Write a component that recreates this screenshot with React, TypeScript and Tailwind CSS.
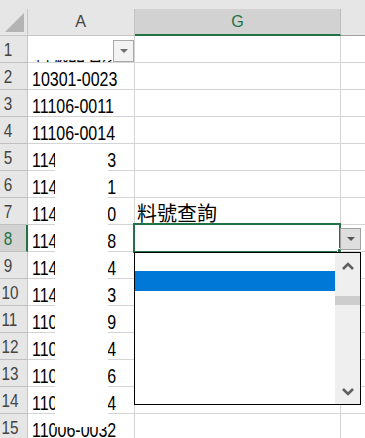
import React from 'react';

const GREEN = '#217346';

type RowDef = { n: number; a: string };

const rows: RowDef[] = [
  { n: 1, a: '' },
  { n: 2, a: '10301-0023' },
  { n: 3, a: '11106-0011' },
  { n: 4, a: '11106-0014' },
  { n: 5, a: '11405-0013' },
  { n: 6, a: '11405-0021' },
  { n: 7, a: '11406-0010' },
  { n: 8, a: '11406-0018' },
  { n: 9, a: '11407-0004' },
  { n: 10, a: '11407-0013' },
  { n: 11, a: '11006-0019' },
  { n: 12, a: '11006-0024' },
  { n: 13, a: '11006-0026' },
  { n: 14, a: '11006-0034' },
  { n: 15, a: '11006-0032' },
];

function Chevron({ up }: { up: boolean }) {
  return (
    <svg width="12" height="8" viewBox="0 0 12 8">
      <polyline
        points={up ? '1,7 6,2 11,7' : '1,1 6,6 11,1'}
        fill="none"
        stroke="#606060"
        strokeWidth="2.6"
      />
    </svg>
  );
}

function SmallTriangle({ color }: { color: string }) {
  return (
    <svg width="8" height="4" viewBox="0 0 8 4">
      <polygon points="0,0 8,0 4,4" fill={color} />
    </svg>
  );
}

export default function App() {
  return (
    <div className="relative w-[365px] h-[438px] overflow-hidden bg-white font-['Liberation_Sans',sans-serif]">
      {/* Column header row */}
      <div className="flex h-[36px] bg-[#e6e6e6]">
        <div className="w-[28px] pt-[9px]">
          <div className="relative h-[27px] border-r border-b border-[#c6c6c6]">
            <svg className="absolute left-[5px] top-[4px]" width="19" height="19" viewBox="0 0 19 19">
              <polygon points="19,0 19,19 0,19" fill="#b4b4b4" />
            </svg>
          </div>
        </div>
        <div className="w-[107px] pt-[9px]">
          <div className="flex h-[27px] items-center justify-center border-r border-b border-r-[#c4c4c4] border-b-[#c6c6c6] pb-[1px] text-[17px] text-[#444444]">
            <span className="inline-block scale-x-[0.95]">A</span>
          </div>
        </div>
        <div className="w-[206px] pt-[9px]">
          <div className="flex h-[27px] items-center justify-center border-r border-r-[#bdbdbd] border-b-2 bg-[#d2d2d2] text-[17px] text-[#217346]" style={{ borderBottomColor: GREEN }}>
            <span className="inline-block scale-x-[0.95]">G</span>
          </div>
        </div>
        <div className="flex-1 pt-[9px]">
          <div className="h-[27px] border-b border-[#a0a0a0]" />
        </div>
      </div>

      {/* Body */}
      <div className="relative">
        {rows.map((r) => {
          const sel = r.n === 8;
          return (
            <div key={r.n} className="flex h-[27px]">
              <div
                className={
                  sel
                    ? 'flex w-[28px] items-center border-b border-r-2 border-b-[#c0c0c0] border-r-[#217346] bg-[#d2d2d2] pt-[2px] text-[18px] text-[#217346]'
                    : 'flex w-[28px] items-center border-b border-r border-b-[#c0c0c0] border-r-[#c6c6c6] bg-[#e6e6e6] pt-[2px] text-[18px] text-[#444444]'
                }
              >
                <span className="block w-[17px] text-center leading-[18px] whitespace-nowrap">
                  <span className="inline-block scale-x-[0.85]">{r.n}</span>
                </span>
              </div>
              <div className="relative flex w-[107px] items-end overflow-hidden border-r border-b border-[#d4d4d4] pl-[4px]">
                {r.n === 1 ? (
                  <div className="absolute bottom-0 left-[6px] flex h-[2px] w-[100px] items-end overflow-hidden">
                    <span className="whitespace-nowrap font-['Noto_Sans_CJK_TC',sans-serif] text-[17px] leading-[17px] text-black">
                      料號品名規格
                    </span>
                  </div>
                ) : (
                  <span className="mb-[2px] inline-block origin-bottom scale-y-[1.3] whitespace-nowrap text-[16px] leading-[12px] text-black">
                    {r.a}
                  </span>
                )}
              </div>
              <div className="flex w-[206px] items-end border-r border-b border-[#d4d4d4] pb-[1px] pl-[2px]">
                {r.n === 7 && (
                  <span className="whitespace-nowrap font-['Noto_Sans_CJK_TC',sans-serif] text-[20px] leading-[20px] text-black">
                    料號查詢
                  </span>
                )}
              </div>
              <div className="flex-1 border-b border-[#d4d4d4]" />
            </div>
          );
        })}

        {/* White cover over column A */}
        <div className="absolute left-[55px] top-[108px] h-[283px] w-[53px] bg-white" />

        {/* Filter button in A1 */}
        <div className="absolute left-[113px] top-[4px] flex h-[22px] w-[21px] items-center justify-center border border-[#a9a9a9] bg-[#f3f3f3]">
          <SmallTriangle color="#6e6e6e" />
        </div>

        {/* Selected cell G8 */}
        <div className="absolute left-[133px] top-[187px] h-[30px] w-[208px] border-2" style={{ borderColor: GREEN }} />
        <div className="absolute left-[337px] top-[212px] h-[5px] w-[5px] border border-white" style={{ backgroundColor: GREEN }} />

        {/* Validation dropdown button */}
        <div className="absolute left-[340px] top-[192px] flex h-[22px] w-[21px] items-center justify-center border border-[#a0a0a0] bg-[#dedede]">
          <SmallTriangle color="#555555" />
        </div>

        {/* Validation list */}
        <div className="absolute left-[134px] top-[216px] flex h-[153px] w-[227px] border border-black bg-white">
          <div className="flex-1">
            <div className="mt-[18px] h-[20px] bg-[#0078d7]" />
          </div>
          <div className="flex w-[25px] flex-col bg-[#efefef]">
            <div className="flex h-[25px] items-center justify-center">
              <Chevron up />
            </div>
            <div className="flex-1">
              <div className="mt-[18px] h-[9px] bg-[#cdcdcd]" />
            </div>
            <div className="flex h-[25px] items-center justify-center">
              <Chevron up={false} />
            </div>
          </div>
        </div>
      </div>
    </div>
  );
}
